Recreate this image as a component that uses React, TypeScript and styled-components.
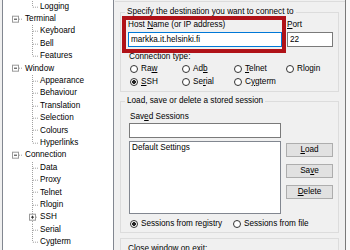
import React from 'react'
import styled, { createGlobalStyle } from 'styled-components'

const ROW = 12.4

const GlobalStyle = createGlobalStyle`
  html, body {
    margin: 0;
    padding: 0;
    width: 350px;
    height: 250px;
    overflow: hidden;
    background: #f0f0f0;
  }
  body {
    font-family: "Liberation Sans", Arial, sans-serif;
    font-size: 8.2px;
    color: #000;
  }
`

const Frame = styled.div`
  position: relative;
  display: flex;
  width: 350px;
  height: 250px;
  overflow: hidden;
  background: #f0f0f0;
`

const TreeBox = styled.div`
  flex: none;
  margin-left: 2px;
  width: 112px;
  box-sizing: border-box;
  border-left: 1px solid #828790;
  border-right: 1px solid #828790;
  background: #fff;
  padding-top: 0.5px;
`

const TreeRow = styled.div<{ $level: number }>`
  display: flex;
  align-items: center;
  height: ${ROW}px;
  padding-left: ${p => (p.$level === 0 ? 9 : 26)}px;
  white-space: nowrap;
  line-height: 10px;
`

const TreeLabel = styled.span`
  margin-left: 1px;
`

const Wire = styled.svg`
  flex: none;
  display: block;
`

const Panel = styled.div`
  flex: 1;
  min-width: 0;
  border-right: 1px solid #7a7a7a;
`

const Edge = styled.div`
  flex: none;
  width: 4px;
  background: #f9f9f9;
`

const TopRule = styled.div`
  margin: 1px 0 0 1px;
  height: 1px;
  background: #dcdcdc;
`

const Group = styled.fieldset<{ $mt: number }>`
  margin: ${p => p.$mt}px 6px 0;
  padding: 0;
  border: 1px solid #dcdcdc;
  min-width: 0;
`

const Legend = styled.legend`
  margin-left: 4px;
  padding: 0 2px;
  line-height: 10px;
  font-size: 8.2px;
`

const Body = styled.div<{ $pt?: number; $pb: number }>`
  padding: ${p => p.$pt ?? 0}px 0 ${p => p.$pb}px 7px;
`

const Caption = styled.div<{ $mt?: number; $indent?: number }>`
  margin-top: ${p => p.$mt ?? 0}px;
  padding-left: ${p => p.$indent ?? 0}px;
  height: 10px;
  line-height: 10px;
  white-space: nowrap;
`

const FieldGrid = styled.div`
  display: grid;
  grid-template-columns: 154px 46px;
  column-gap: 5px;
  row-gap: 2px;
  margin-top: 3px;
`

const TextBox = styled.input<{ $focused?: boolean; $w?: number }>`
  display: block;
  box-sizing: border-box;
  width: ${p => (p.$w ? `${p.$w}px` : '100%')};
  height: 15px;
  margin: 0;
  padding: 0 2px;
  border: 1px solid ${p => (p.$focused ? '#0078d7' : '#7a7a7a')};
  background: #fff;
  font-family: "Liberation Sans", Arial, sans-serif;
  font-size: 8.2px;
  color: #000;
  outline: none;
`

const RadioGrid = styled.div<{ $col: number; $mt?: number }>`
  display: grid;
  grid-template-columns: repeat(auto-fill, ${p => p.$col}px);
  grid-auto-rows: 13px;
  margin-top: ${p => p.$mt ?? 0}px;
  padding-left: 2px;
`

const RadioItem = styled.label`
  display: flex;
  align-items: center;
  white-space: nowrap;
  line-height: 10px;
`

const RadioDot = styled.span<{ $on?: boolean }>`
  flex: none;
  box-sizing: border-box;
  width: 8px;
  height: 8px;
  margin-right: 3px;
  border: 1px solid #333;
  border-radius: 50%;
  background: ${p =>
    p.$on ? 'radial-gradient(circle, #222 0 1.6px, #fff 2.2px)' : '#fff'};
`

const SessionInput = styled(TextBox)`
  margin: 1px 0 0 1px;
`

const ListRow = styled.div`
  display: flex;
  margin-top: 3px;
  padding-left: 1px;
`

const ListBox = styled.div`
  box-sizing: border-box;
  width: 152px;
  height: 73px;
  padding: 1px 2px;
  border: 1px solid #828790;
  background: #fff;
  line-height: 10px;
`

const ButtonStack = styled.div`
  display: flex;
  flex-direction: column;
  gap: 7px;
  margin-left: 5px;
  padding-top: 2px;
`

const Button = styled.button`
  box-sizing: border-box;
  width: 47px;
  height: 14px;
  padding: 0;
  border: 1px solid #adadad;
  background: #e1e1e1;
  font-family: "Liberation Sans", Arial, sans-serif;
  font-size: 8.2px;
  line-height: 12px;
  color: #000;
`

const Highlight = styled.div`
  position: absolute;
  left: 122px;
  top: 16px;
  width: 164px;
  height: 37px;
  box-sizing: border-box;
  border: 4px solid #b01218;
  pointer-events: none;
`

type Node = { label: React.ReactNode; level: number; last?: boolean; toggle?: '+' | '-' }

const tree: Node[] = [
  { label: 'Logging', level: 1, last: true },
  { label: 'Terminal', level: 0, toggle: '-' },
  { label: 'Keyboard', level: 1 },
  { label: 'Bell', level: 1 },
  { label: 'Features', level: 1, last: true },
  { label: 'Window', level: 0, toggle: '-' },
  { label: 'Appearance', level: 1 },
  { label: 'Behaviour', level: 1 },
  { label: 'Translation', level: 1 },
  { label: 'Selection', level: 1 },
  { label: 'Colours', level: 1 },
  { label: 'Hyperlinks', level: 1, last: true },
  { label: 'Connection', level: 0, toggle: '-' },
  { label: 'Data', level: 1 },
  { label: 'Proxy', level: 1 },
  { label: 'Telnet', level: 1 },
  { label: 'Rlogin', level: 1 },
  { label: 'SSH', level: 1, toggle: '+' },
  { label: 'Serial', level: 1 },
  { label: 'Cygterm', level: 1, last: true },
]

function Toggle({ x, y, sign }: { x: number; y: number; sign: '+' | '-' }) {
  return (
    <>
      <rect x={x - 3} y={y - 3} width={6} height={6} fill="#fff" stroke="#9a9a9a" />
      <line x1={x - 1.5} y1={y} x2={x + 1.5} y2={y} stroke="#333" />
      {sign === '+' && <line x1={x} y1={y - 1.5} x2={x} y2={y + 1.5} stroke="#333" />}
    </>
  )
}

function Connector({ node }: { node: Node }) {
  const mid = ROW / 2
  const dots = { stroke: '#a0a0a0', strokeDasharray: '1 1' }
  if (node.level === 0) {
    return (
      <Wire width={12} height={ROW} viewBox={`0 0 12 ${ROW}`}>
        <line x1={7} y1={mid} x2={11} y2={mid} {...dots} />
        <Toggle x={3.5} y={mid} sign={node.toggle ?? '-'} />
      </Wire>
    )
  }
  return (
    <Wire width={10} height={ROW} viewBox={`0 0 10 ${ROW}`}>
      <line x1={3.5} y1={0} x2={3.5} y2={node.last ? mid : ROW} {...dots} />
      <line x1={node.toggle ? 7 : 4} y1={mid} x2={9} y2={mid} {...dots} />
      {node.toggle && <Toggle x={3.5} y={mid} sign={node.toggle} />}
    </Wire>
  )
}

function Radio({ on, children }: { on?: boolean; children: React.ReactNode }) {
  return (
    <RadioItem>
      <RadioDot $on={on} />
      <span>{children}</span>
    </RadioItem>
  )
}

export default function App() {
  return (
    <>
      <GlobalStyle />
      <Frame>
        <TreeBox>
          {tree.map((node, i) => (
            <TreeRow key={i} $level={node.level}>
              <Connector node={node} />
              <TreeLabel>{node.label}</TreeLabel>
            </TreeRow>
          ))}
        </TreeBox>

        <Panel>
          <TopRule />

          <Group $mt={5}>
            <Legend>Specify the destination you want to connect to</Legend>
            <Body $pb={3}>
              <FieldGrid>
                <Caption>Host <u>N</u>ame (or IP address)</Caption>
                <Caption><u>P</u>ort</Caption>
                <TextBox $focused readOnly value="markka.it.helsinki.fi" />
                <TextBox readOnly value="22" />
              </FieldGrid>
              <Caption $mt={5} $indent={1}>Connection type:</Caption>
              <RadioGrid $col={52}>
                <Radio>Ra<u>w</u></Radio>
                <Radio>Ad<u>b</u></Radio>
                <Radio><u>T</u>elnet</Radio>
                <Radio>Rlogin</Radio>
                <Radio on><u>S</u>SH</Radio>
                <Radio>Se<u>r</u>ial</Radio>
                <Radio>C<u>y</u>gterm</Radio>
              </RadioGrid>
            </Body>
          </Group>

          <Group $mt={4}>
            <Legend>Load, save or delete a stored session</Legend>
            <Body $pb={2}>
              <Caption $mt={6} $indent={2}>Sav<u>e</u>d Sessions</Caption>
              <SessionInput $w={152} readOnly value="" />
              <ListRow>
                <ListBox>Default Settings</ListBox>
                <ButtonStack>
                  <Button><u>L</u>oad</Button>
                  <Button>Sa<u>v</u>e</Button>
                  <Button><u>D</u>elete</Button>
                </ButtonStack>
              </ListRow>
              <RadioGrid $col={103} $mt={3}>
                <Radio on>Sessions from registry</Radio>
                <Radio>Sessions from file</Radio>
              </RadioGrid>
            </Body>
          </Group>

          <Group $mt={5}>
            <Body $pt={5} $pb={3}>
              <Caption>Close window on exit:</Caption>
            </Body>
          </Group>
        </Panel>

        <Edge />
        <Highlight />
      </Frame>
    </>
  )
}
